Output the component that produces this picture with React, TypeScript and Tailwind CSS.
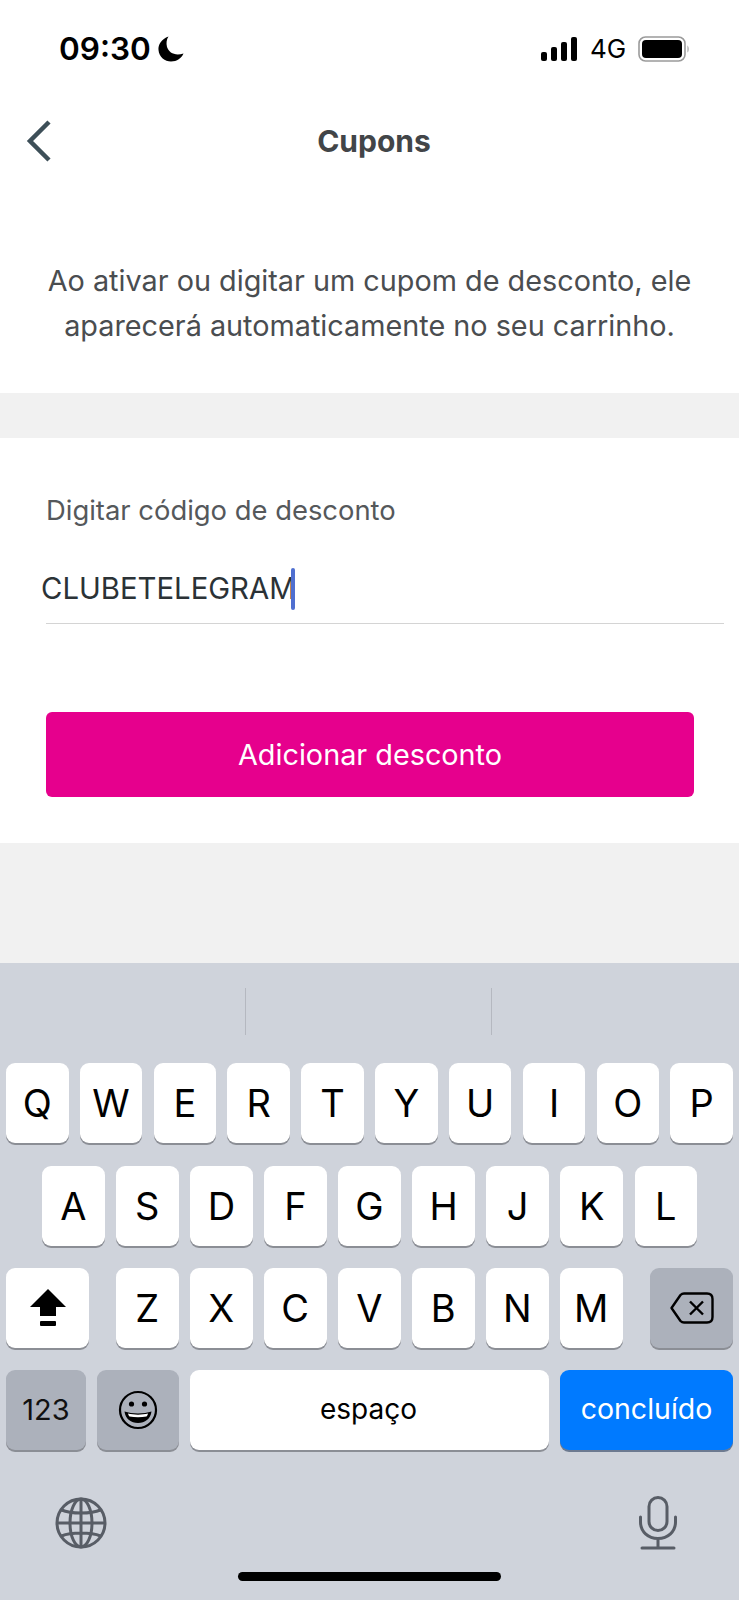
import React from 'react';

const Letter = ({ label }: { label: string }) => (
  <div className="w-[62.5px] h-[80px] shrink-0 rounded-[9px] bg-white shadow-[0_2px_0_#8b8e95] flex items-center justify-center text-[38px] text-black font-normal">
    {label}
  </div>
);

const App = () => {
  return (
    <div className="w-[739px] h-[1600px] flex flex-col bg-[#f1f1f1] overflow-hidden font-['Inter',sans-serif]">
      <div className="h-[393px] shrink-0 bg-white flex flex-col">
        {/* status bar */}
        <div className="h-[98px] shrink-0 flex items-center justify-between pl-[59px] pr-[49px]">
          <div className="flex items-center gap-[7px]">
            <span className="text-[31.5px] leading-none font-semibold text-black">09:30</span>
            <svg width="26" height="26" viewBox="0 0 26 26">
              <path d="M10.5 0.5 C3.5 3 0 8.5 0.5 14 C1 21 7 25.5 13 25.5 C19 25.5 23.5 22 25.5 17.5 C17 20 11 17 9 11 C8 7 8.5 3.5 10.5 0.5 Z" fill="#000" />
            </svg>
          </div>
          <div className="flex items-center">
            <svg width="36" height="24" viewBox="0 0 36 24">
              <rect x="0" y="15" width="6" height="9" rx="2" fill="#000" />
              <rect x="10" y="10" width="6" height="14" rx="2" fill="#000" />
              <rect x="20" y="5" width="6" height="19" rx="2" fill="#000" />
              <rect x="30" y="0" width="6" height="24" rx="2" fill="#000" />
            </svg>
            <span className="ml-[13px] text-[26px] leading-none font-normal text-black w-[35px]">4G</span>
            <svg className="ml-[13px]" width="52" height="26" viewBox="0 0 52 26">
              <rect x="1" y="1" width="46" height="24" rx="6.5" fill="none" stroke="#9b9b9b" strokeWidth="1.6" />
              <rect x="4" y="4" width="40" height="18" rx="4" fill="#000" />
              <path d="M49.5 9.5 C51 10.5 51 15.5 49.5 16.5 Z" fill="#9b9b9b" />
            </svg>
          </div>
        </div>

        {/* nav */}
        <div className="relative h-[86px] shrink-0 flex items-center justify-center">
          <svg className="absolute left-[26px] top-[22px]" width="26" height="42" viewBox="0 0 26 42">
            <path d="M23 2 L4 21 L23 40" fill="none" stroke="#3d4f58" strokeWidth="4.5" />
          </svg>
          <span className="ml-[9px] text-[30px] font-bold text-[#424548]">Cupons</span>
        </div>

        <p className="mt-[74px] text-center text-[28.8px] leading-[45px] text-[#4a4d50]">
          Ao ativar ou digitar um cupom de desconto, ele
          <br />
          aparecerá automaticamente no seu carrinho.
        </p>
      </div>

      {/* form */}
      <div className="mt-[45px] h-[405px] shrink-0 bg-white pl-[46px] pt-[54px]">
        <div className="text-[27.4px] leading-[36px] text-[#55585b]">Digitar código de desconto</div>
        <div className="mt-[27px] w-[678px] h-[69px] border-b border-[#d4d4d4] pt-[13px]">
          <div className="flex items-center h-[42px] -ml-[5px]">
            <span className="text-[29.3px] leading-none text-[#2b3236]">CLUBETELEGRAM</span>
            <span className="w-[4px] h-[42px] rounded-sm bg-[#4f6fd0] -ml-[5px]"></span>
          </div>
        </div>
        <div className="mt-[88px] w-[648px] h-[85px] rounded-[6px] bg-[#e6008d] flex items-center justify-center text-[28.8px] text-white">
          Adicionar desconto
        </div>
      </div>

      {/* keyboard */}
      <div className="mt-[120px] flex-1 bg-[#cfd3db] flex flex-col">
        <div className="h-[100px] shrink-0 flex justify-center gap-[245px] pt-[25px] pr-[2px]">
          <div className="w-[1px] h-[47px] bg-[#b5b8c0]"></div>
          <div className="w-[1px] h-[47px] bg-[#b5b8c0]"></div>
        </div>

        <div className="flex justify-between px-[6px]">
          {'QWERTYUIOP'.split('').map((k) => <Letter key={k} label={k} />)}
        </div>

        <div className="mt-[23px] flex justify-between px-[42px]">
          {'ASDFGHJKL'.split('').map((k) => <Letter key={k} label={k} />)}
        </div>

        <div className="mt-[22px] flex items-start px-[6px]">
          <div className="w-[83px] h-[80px] shrink-0 rounded-[9px] bg-white shadow-[0_2px_0_#8b8e95] flex items-center justify-center">
            <svg width="36" height="38" viewBox="0 0 36 38">
              <path d="M18 0 L36 18 L26 18 L26 27 L10 27 L10 18 L0 18 Z" fill="#000" />
              <rect x="10" y="32" width="16" height="5" rx="1" fill="#000" />
            </svg>
          </div>
          <div className="ml-[27px] flex gap-[11.5px]">
            {'ZXCVBNM'.split('').map((k) => <Letter key={k} label={k} />)}
          </div>
          <div className="ml-auto w-[83px] h-[80px] shrink-0 rounded-[9px] bg-[#acb1bb] shadow-[0_2px_0_#8b8e95] flex items-center justify-center">
            <svg width="44" height="32" viewBox="0 0 44 32" fill="none" stroke="#000" strokeWidth="2.4">
              <path d="M14 1.5 L37 1.5 C40.5 1.5 42.5 3.5 42.5 7 L42.5 25 C42.5 28.5 40.5 30.5 37 30.5 L14 30.5 C12.5 30.5 11.5 30 10.5 29 L1.5 16 L10.5 3 C11.5 2 12.5 1.5 14 1.5 Z" strokeLinejoin="round" />
              <path d="M20 9.5 L33 22.5 M33 9.5 L20 22.5" />
            </svg>
          </div>
        </div>

        <div className="mt-[22px] flex px-[6px]">
          <div className="w-[80px] h-[80px] shrink-0 rounded-[9px] bg-[#acb1bb] shadow-[0_2px_0_#8b8e95] flex items-center justify-center text-[29px] text-[#111]">123</div>
          <div className="ml-[11px] w-[82px] h-[80px] shrink-0 rounded-[9px] bg-[#acb1bb] shadow-[0_2px_0_#8b8e95] flex items-center justify-center">
            <svg width="40" height="40" viewBox="0 0 40 40">
              <circle cx="20" cy="20" r="18" fill="none" stroke="#000" strokeWidth="2.2" />
              <circle cx="13.5" cy="14" r="2.6" fill="#000" />
              <circle cx="26.5" cy="14" r="2.6" fill="#000" />
              <path d="M6.5 21.5 C14 24 26 24 33.5 21.5 C32.5 29 27 33 20 33 C13 33 7.5 29 6.5 21.5 Z" fill="#000" />
              <path d="M10 23.5 C16 25 24 25 30 23.5 C29.5 25.5 29 26 28.5 26.5 C23 27.5 17 27.5 11.5 26.5 C11 26 10.5 25.5 10 23.5 Z" fill="#fff" />
            </svg>
          </div>
          <div className="ml-[11px] w-[359px] h-[80px] shrink-0 rounded-[9px] bg-white shadow-[0_2px_0_#8b8e95] flex items-center justify-center text-[28px] text-black pr-[2px] pb-[2px]">espaço</div>
          <div className="ml-[11px] w-[173px] h-[80px] shrink-0 rounded-[9px] bg-[#007aff] shadow-[0_2px_0_#6d7a90] flex items-center justify-center text-[28.5px] text-white pb-[2px]">concluído</div>
        </div>

        <div className="mt-[46px] flex items-center justify-between pl-[55px] pr-[62px]">
          <svg width="52" height="52" viewBox="0 0 52 52" fill="none" stroke="#585d66" strokeWidth="3">
            <circle cx="26" cy="26" r="24" />
            <ellipse cx="26" cy="26" rx="11" ry="24" />
            <path d="M26 2 V50 M2 26 H50 M6.5 13 C16 17 36 17 45.5 13 M6.5 39 C16 35 36 35 45.5 39" />
          </svg>
          <svg width="38" height="54" viewBox="0 0 38 54" fill="none" stroke="#585d66" strokeWidth="3" strokeLinecap="round">
            <rect x="10" y="1.5" width="18" height="33" rx="9" />
            <path d="M1.5 21 V26 C1.5 35.5 9 42.5 19 42.5 C29 42.5 36.5 35.5 36.5 26 V21 M19 42.5 V52 M3 52 H35" />
          </svg>
        </div>

        <div className="mt-[22px] mx-auto w-[263px] h-[9px] shrink-0 rounded-full bg-black"></div>
      </div>
    </div>
  );
};

export default App;
